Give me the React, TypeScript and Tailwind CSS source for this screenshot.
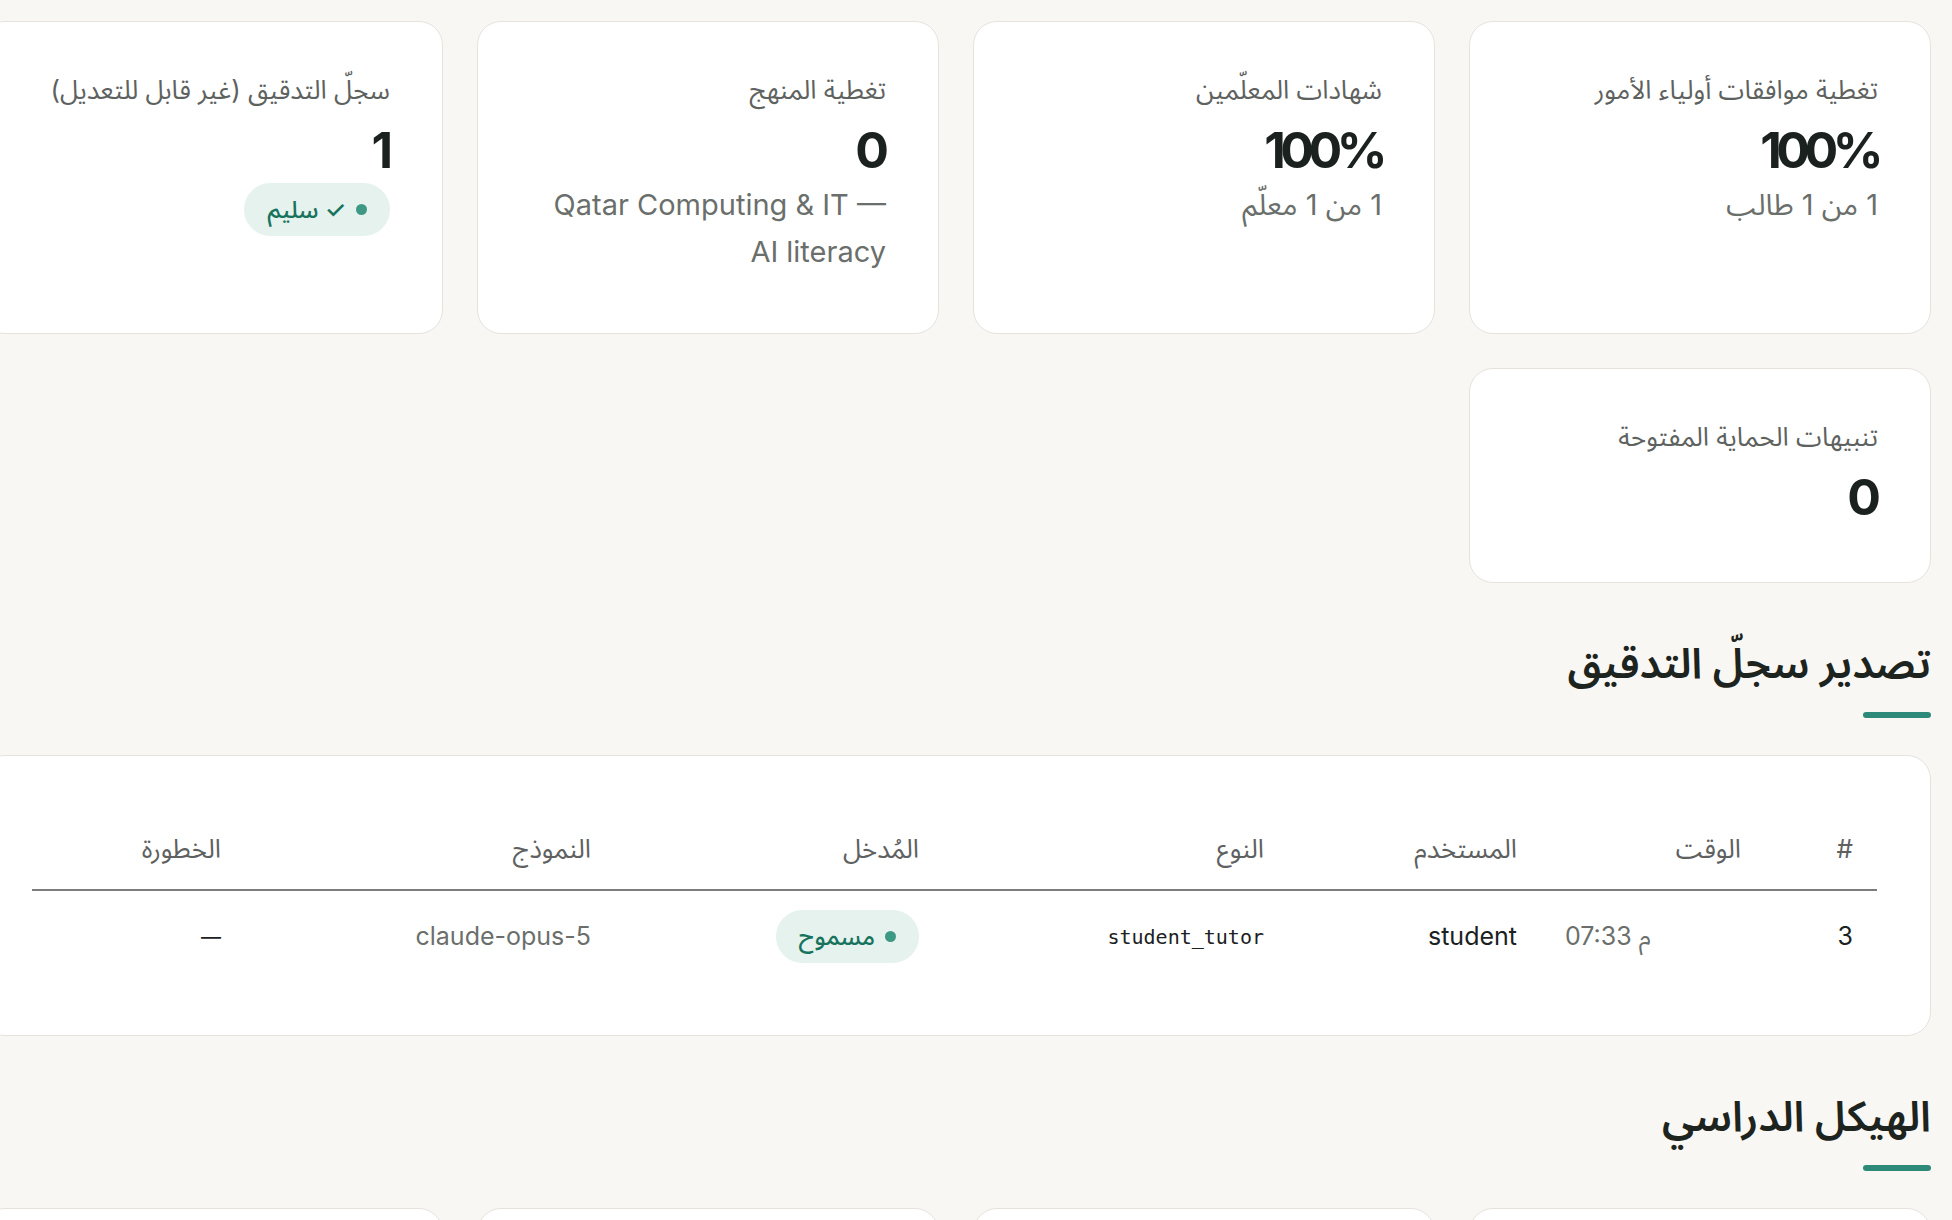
import React from 'react';

type Stat = {
    label: string;
    value: string;
    sub?: string;
    badge?: string;
};

const stats: Stat[] = [
    { label: 'تغطية موافقات أولياء الأمور', value: '100%', sub: '1 من 1 طالب' },
    { label: 'شهادات المعلّمين', value: '100%', sub: '1 من 1 معلّم' },
    { label: 'تغطية المنهج', value: '0', sub: 'Qatar Computing & IT — AI literacy' },
    { label: 'سجلّ التدقيق (غير قابل للتعديل)', value: '1', badge: '✓ سليم' },
    { label: 'تنبيهات الحماية المفتوحة', value: '0' },
];

const columns = [
    { title: '#', width: 'w-[112px]' },
    { title: 'الوقت', width: 'w-[224px]' },
    { title: 'المستخدم', width: 'w-[253px]' },
    { title: 'النوع', width: 'w-[345px]' },
    { title: 'المُدخل', width: 'w-[328px]' },
    { title: 'النموذج', width: 'w-[370px]' },
    { title: 'الخطورة', width: 'w-[213px]' },
];

const Pill = ({ text }: { text: string }) => (
    <span className="inline-flex items-center gap-[10px] rounded-full bg-[#e5f2ed] px-[23px] h-[53px] text-[24px] font-medium text-[#17735d]">
        <span className="w-[11px] h-[11px] rounded-full bg-[#3d9984]" />
        {text}
    </span>
);

const StatCard = ({ stat }: { stat: Stat }) => (
    <div className="bg-white border border-[#e6e3dd] rounded-[24px] px-[52px] pt-[52px] pb-[54px] flex flex-col items-start">
        <div className="text-[26px] leading-[32px] text-[#5e625f]">{stat.label}</div>
        <div
            className={`mt-[13px] text-[50px] leading-[62px] font-bold text-[#1b211e] ${
                stat.value.length > 1 ? 'tracking-[-0.11em]' : 'tracking-normal -mr-[3px]'
            }`}
        >
            {stat.value}
        </div>
        {stat.sub && (
            <div className="mb-[4px] text-[29px] leading-[47px] text-[#6b6f6c]">{stat.sub}</div>
        )}
        {stat.badge && (
            <div className="mt-[2px]">
                <Pill text={stat.badge} />
            </div>
        )}
    </div>
);

const SectionTitle = ({ title }: { title: string }) => (
    <div className="mt-[52px] mb-[37px]">
        <h2 className="text-[42px] leading-[56px] font-semibold text-[#1d2420]">{title}</h2>
        <div className="mt-[21px] w-[68px] h-[6px] rounded-full bg-[#2e8a78]" />
    </div>
);

export default function App() {
    return (
        <div
            dir="rtl"
            className="min-h-screen overflow-hidden bg-[#f8f7f3] pt-[21px] pr-[21px] font-[Inter,'Noto_Sans_Arabic',sans-serif]"
        >
            <div className="w-[1950px]">
                {/* summary cards */}
                <div className="grid grid-cols-4 gap-[34px]">
                    {stats.map((s) => (
                        <StatCard key={s.label} stat={s} />
                    ))}
                </div>

                <SectionTitle title="تصدير سجلّ التدقيق" />

                <div className="bg-white border border-[#e6e3dd] rounded-[24px] px-[53px] pt-[52px] pb-[53px]">
                    <table className="w-full table-fixed border-collapse text-right">
                        <thead>
                            <tr className="border-b-2 border-[#7d7d7d]">
                                {columns.map((c) => (
                                    <th
                                        key={c.title}
                                        className={`${c.width} px-[24px] py-[24px] text-[26px] leading-[33px] font-normal text-[#5e615f]`}
                                    >
                                        {c.title}
                                    </th>
                                ))}
                            </tr>
                        </thead>
                        <tbody>
                            <tr className="text-[25px] text-[#1b211e]">
                                <td className="px-[24px] py-[19px]">3</td>
                                <td className="px-[24px] py-[19px] text-left text-[#6b6f6c]" dir="ltr">
                                    07:33 م
                                </td>
                                <td className="px-[24px] py-[19px]">student</td>
                                <td className="px-[24px] py-[19px] font-['DejaVu_Sans_Mono',monospace] text-[20px]">
                                    student_tutor
                                </td>
                                <td className="px-[24px] py-[19px]">
                                    <Pill text="مسموح" />
                                </td>
                                <td className="px-[24px] py-[19px] text-[#6b6f6c]">claude-opus-5</td>
                                <td className="px-[24px] py-[19px] text-[20px]">—</td>
                            </tr>
                        </tbody>
                    </table>
                </div>

                <SectionTitle title="الهيكل الدراسي" />

                <div className="grid grid-cols-4 gap-[34px]">
                    {['', '', '', ''].map((_, i) => (
                        <div key={i} className="h-[240px] bg-white border border-[#e6e3dd] rounded-[24px]" />
                    ))}
                </div>
            </div>
        </div>
    );
}
